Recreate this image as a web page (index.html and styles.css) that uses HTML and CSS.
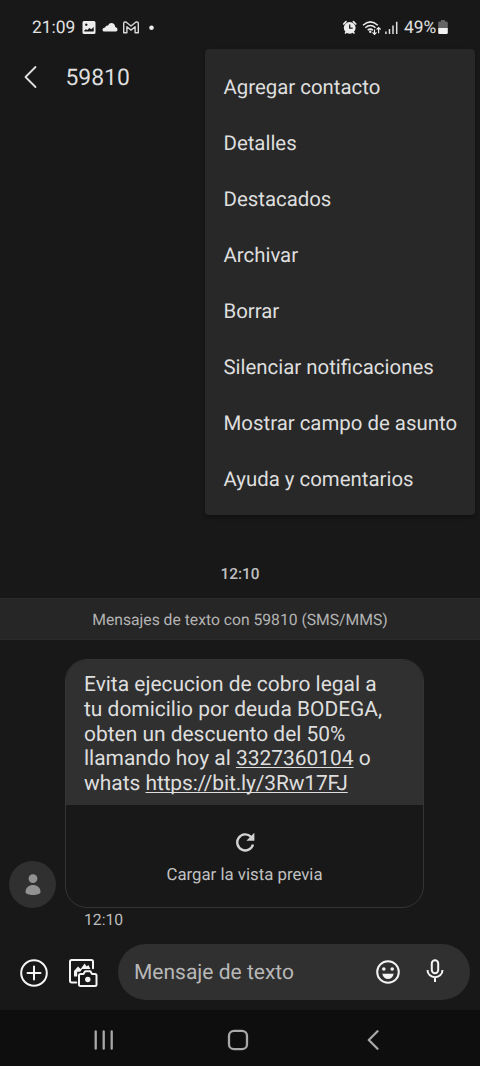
FILE: index.html
```html
<!DOCTYPE html>
<html lang="es">
<head>
<meta charset="utf-8">
<title>59810</title>
<link rel="stylesheet" href="styles.css">
</head>
<body>
<div class="phone">
  <div class="status">
    <span class="clock">21:09</span>
    <svg class="notif" width="74" height="16" viewBox="0 0 74 16">
      <path fill="#ececec" fill-rule="evenodd" d="M2 1h10q1.500 0 1.500 1.500v10q0 1.500-1.500 1.500h-10q-1.500 0-1.500-1.500v-10q0-1.500 1.500-1.500zM2.300 11.500h9.400v-4.500l-2.400 2.300-2-1.400-2 2.200-1.600-.9-1.400 1.300zM4.300 3.500a1.200 1.200 0 1 0 .01 0z"/>
      <path fill="#ececec" d="M22.500 11.500c-1.300 0-2-.8-2-1.800s1-2 2.700-2.200c.5-1.500 1.600-2.200 2.900-1.900C27.500 1.700 33 2.500 33.200 7c1.600.4 2.300 1.400 2.300 2.700 0 1.200-.8 1.800-2 1.800z"/>
      <path fill="none" stroke="#d8d8d8" stroke-width="1.400" stroke-linejoin="round" d="M41.700 12.700V3.300q0-1.300 1.300-1.300h1l5 4 5-4h1q1.300 0 1.300 1.300v9.400h-3.200V6.700l-4.100 3.400-4.100-3.400v6z"/>
      <circle cx="69.500" cy="7.700" r="2.300" fill="#ececec"/>
    </svg>
    <svg class="signals" width="56" height="18" viewBox="0 0 56 18">
      <circle cx="7.700" cy="8.800" r="5.900" fill="#ececec"/>
      <path fill="none" stroke="#ececec" stroke-width="1.700" stroke-linecap="round" d="M1.700 5L4 2.600M13.700 5l-2.300-2.400M3.500 14l1-1M12 14l-1-1"/>
      <path fill="none" stroke="#191919" stroke-width="1.300" d="M7.700 5.500v3.700h3"/>
      <g fill="none" stroke="#ececec" stroke-width="1.500"><path d="M21 6.200q7.400-6.700 14.800 0M23.300 8.700q5.100-4.400 10.200 0M25.700 11.200q2.700-2.200 5.200 0"/></g>
      <circle cx="28.300" cy="12.700" r="1.200" fill="#ececec"/>
      <path fill="none" stroke="#ececec" stroke-width="1.200" d="M32.500 10.500v4.700M30.500 13.300l2 2 2-2M36.600 14.300V8.700M34.600 10.500l2-2 2 2"/>
      <path fill="none" stroke="#e0e0e0" stroke-width="1.500" d="M43.900 15v-2.500M47.500 15v-5M51 15V6.500M54.700 15V2.700"/>
    </svg>
    <span class="percent">49%</span>
    <svg class="battery" width="10" height="15" viewBox="0 0 10 15"><path fill="#666" d="M3 0h4v1.500h1.500q1.300 0 1.300 1.300V8H.2V2.800q0-1.300 1.300-1.300H3z"/><path fill="#f2f2f2" d="M.2 8h9.600v4.700q0 1.300-1.300 1.300h-7Q.2 14 .2 12.700z"/></svg>
  </div>

  <header class="header">
    <svg width="14" height="24" viewBox="0 0 14 24"><path class="line" d="M11.500 2L1.500 12l10 10"/></svg>
    <h1 class="contact">59810</h1>
  </header>

  <ul class="menu">
    <li>Agregar contacto</li>
    <li>Detalles</li>
    <li>Destacados</li>
    <li>Archivar</li>
    <li>Borrar</li>
    <li>Silenciar notificaciones</li>
    <li>Mostrar campo de asunto</li>
    <li>Ayuda y comentarios</li>
  </ul>

  <main class="thread">
    <div class="day">12:10</div>
    <div class="banner"><span>Mensajes de texto con 59810 (SMS/MMS)</span></div>
    <div class="message">
      <div class="avatar">
        <svg width="16" height="22" viewBox="0 0 16 22" fill="#929292"><circle cx="8" cy="4.600" r="4.400"/><path d="M.5 18C.5 8.800 15.500 8.800 15.500 18c0 4-15 4-15 0z"/></svg>
      </div>
      <div class="bubble">
        <p class="body">Evita ejecucion de cobro legal a<br>tu domicilio por deuda BODEGA,<br>obten un descuento del 50%<br>llamando hoy al <u>3327360104</u> o<br>whats <u class="url">https://bit.ly/3Rw17FJ</u></p>
        <div class="preview">
          <svg width="20" height="20" viewBox="0 0 20 20"><path fill="none" stroke="#d2d2d2" stroke-width="2.400" d="M16 4.800A8 8 0 1 0 18 12.500"/><path fill="#d2d2d2" d="M19.400.8v8h-8z"/></svg>
          <span>Cargar la vista previa</span>
        </div>
      </div>
    </div>
    <div class="sent">12:10</div>
  </main>

  <footer class="compose">
    <svg class="add" width="28" height="28" viewBox="0 0 28 28" fill="none" stroke="#f4f4f4" stroke-width="2"><circle cx="14" cy="14" r="12.800"/><path stroke-linecap="round" d="M14 7.500v13M7.500 14h13"/></svg>
    <svg class="gallery" width="30" height="30" viewBox="0 0 30 30" fill="none" stroke="#f4f4f4" stroke-width="2" stroke-linejoin="round"><path stroke-linecap="round" d="M8.300 24.500H3.700q-1.700 0-1.700-1.700V3.700Q2 2 3.700 2h19.600Q25 2 25 3.700v6.500"/><path fill="#f4f4f4" stroke="none" d="M6 18.500V13l4-4.500 2.700 2.500 3.900-5.500 2 3 1.800-1.500 2 4h-8.200l-2 2.700H9.200v4.800z"/><path d="M12.500 16h3l1.600-2.700h5.300L24 16h3q1.500 0 1.500 1.500v9q0 1.500-1.500 1.500H12.500Q11 28 11 26.500v-9q0-1.500 1.500-1.500z"/><circle cx="19.800" cy="21.500" r="2.700" fill="#f4f4f4" stroke="none"/></svg>
    <div class="field">
      <span class="hint">Mensaje de texto</span>
      <svg class="smile" width="24" height="24" viewBox="0 0 24 24"><circle cx="12" cy="12" r="10.800" fill="none" stroke="#f4f4f4" stroke-width="2"/><g fill="#f4f4f4"><circle cx="7.800" cy="9" r="1.800"/><circle cx="16.200" cy="9" r="1.800"/><path d="M6.300 13.700h11.400C16.500 20.700 7.500 20.700 6.300 13.700z"/></g></svg>
      <svg class="mic" width="18" height="24" viewBox="0 0 18 24" fill="none" stroke="#f4f4f4" stroke-width="2"><rect x="5.800" y="1.200" width="6.400" height="13" rx="3.200"/><path d="M1.500 11C1.500 20.500 16.500 20.500 16.500 11M9 18v5"/></svg>
    </div>
  </footer>

  <nav class="nav">
    <svg width="20" height="20" viewBox="0 0 20 20"><path class="key" d="M1.700 1.300v17.400M9.700 1.300v17.400M17.700 1.300v17.400"/></svg>
    <svg width="22" height="22" viewBox="0 0 22 22"><rect class="key" x="2" y="1.800" width="18" height="18.400" rx="5"/></svg>
    <svg width="14" height="20" viewBox="0 0 14 20"><path class="key" d="M10.500 1.300L1.800 10l8.700 8.700"/></svg>
  </nav>
</div>
</body>
</html>
```
FILE: styles.css
```css
* { box-sizing: border-box; }
body { margin: 0; background: #181818; }
svg { display: block; flex: none; }
.phone {
  position: relative;
  display: flex;
  flex-direction: column;
  width: 480px;
  height: 1066px;
  overflow: hidden;
  background: #181818;
  color: #dedede;
  font-family: Roboto, "Liberation Sans", sans-serif;
  white-space: nowrap;
  text-rendering: geometricPrecision;
}
.status {
  display: flex;
  align-items: center;
  height: 48px;
  padding: 7px 0 0 32px;
  font-size: 17.4px;
  color: #e2e2e2;
}
.clock { width: 50px; }
.signals { margin-left: 186px; }
.percent { width: 34px; margin-left: 6px; }
.header { display: flex; align-items: center; height: 58px; padding-left: 24px; }
.line { fill: none; stroke: #e0e0e0; stroke-width: 1.8; stroke-linecap: round; stroke-linejoin: round; }
.contact { margin: 0 0 0 27.5px; font-size: 22.9px; font-weight: 400; }
.menu {
  position: absolute;
  top: 49px;
  left: 205px;
  width: 270px;
  height: 466px;
  margin: 0;
  padding: 10px 0 8px 18.5px;
  border-radius: 4px;
  background: #282828;
  box-shadow: 0 2px 4px rgba(0, 0, 0, .3);
  list-style: none;
  font-size: 20.4px;
}
.menu li { height: 56px; line-height: 56px; }
.thread { display: flex; flex-direction: column; padding-top: 457px; height: 824px; }
.day { height: 35px; line-height: 22px; text-align: center; font-size: 15.4px; font-weight: 500; color: #c0c0c0; }
.banner {
  height: 42px;
  border-top: 1px solid #2b2b2b;
  border-bottom: 1px solid #2b2b2b;
  background: #262626;
  text-align: center;
  line-height: 42px;
  font-size: 15.7px;
  color: #b4b4b4;
}
.message { display: flex; align-items: flex-end; gap: 9px; margin-top: 19px; padding-left: 9px; }
.avatar { display: flex; align-items: center; justify-content: center; width: 47px; height: 47px; border-radius: 50%; background: #303030; }
.bubble { width: 359px; height: 249px; border: 1px solid #343434; border-radius: 22px; overflow: hidden; }
.body { height: 145px; margin: 0; padding: 13px 0 0 18px; background: #303030; font-size: 20.95px; line-height: 24.8px; }
.body u { text-underline-offset: 2px; text-decoration-thickness: 1px; text-decoration-skip-ink: none; }
.body .url { letter-spacing: -.13px; }
.preview { display: flex; flex-direction: column; align-items: center; gap: 13px; padding-top: 27px; font-size: 16.8px; color: #c2c2c2; }
.sent { margin: 2px 0 0 84px; font-size: 15.7px; color: #bcbcbc; }
.compose { display: flex; align-items: center; height: 80px; padding: 4px 10px 0 20px; }
.add { margin-top: 1px; }
.gallery { margin: 2px 0 0 20px; }
.field { display: flex; align-items: center; width: 352px; height: 56px; margin-left: 20px; padding-left: 16px; border-radius: 28px; background: #303030; }
.hint { width: 242px; padding-top: 2px; font-size: 21px; color: #b8b8b8; }
.mic { margin: 0 0 2px 26px; }
.nav { display: flex; align-items: center; height: 56px; padding: 3px 0 0 94px; background: #0e0e0e; }
.nav svg + svg { margin-left: 113px; }
.nav svg + svg + svg { margin-left: 118px; }
.key { fill: none; stroke: #a8a8a8; stroke-width: 2.3; stroke-linecap: round; stroke-linejoin: round; }
```
